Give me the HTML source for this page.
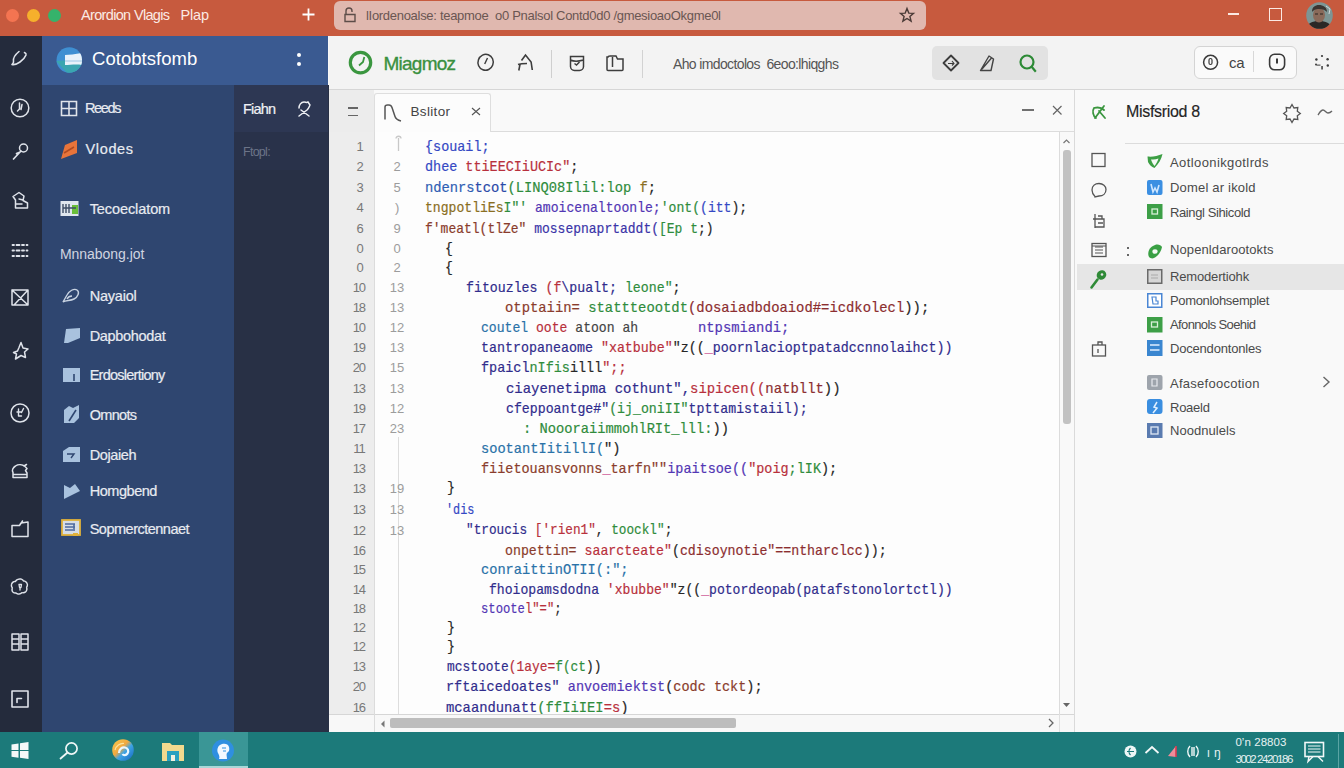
<!DOCTYPE html>
<html><head><meta charset="utf-8">
<style>
*{margin:0;padding:0;box-sizing:border-box}
html,body{width:1344px;height:768px;overflow:hidden;background:#f7f7f7;font-family:"Liberation Sans",sans-serif;position:relative}
.a{position:absolute}
.t{white-space:pre}
svg{overflow:visible}
</style></head><body>
<div class="a" style="left:0px;top:36px;width:42px;height:696px;background:#242b3c;"></div>
<svg class="a" style="left:9.5px;top:49.5px;" width="20" height="20" viewBox="0 0 20 20"><g fill="none" stroke="#dfe3ea" stroke-width="1.5" stroke-linecap="round" stroke-linejoin="round"><path d="M9 1.5C6 4 3 8 3.5 11c.5 2-1 2.5-1.5 3.5 2 .5 5-.5 8-2.5s5-4.5 6-7c.3-1-.5-2-1.5-2.5" stroke-width="1.6"/></g></svg>
<svg class="a" style="left:9.5px;top:98px;" width="20" height="20" viewBox="0 0 20 20"><g fill="none" stroke="#dfe3ea" stroke-width="1.5" stroke-linecap="round" stroke-linejoin="round"><circle cx="10" cy="10" r="8.8"/><path d="M9.5 5v6l-2 2M12 6.5l-1 5" stroke-width="1.5"/></g></svg>
<svg class="a" style="left:9.5px;top:141.5px;" width="20" height="20" viewBox="0 0 20 20"><g fill="none" stroke="#dfe3ea" stroke-width="1.5" stroke-linecap="round" stroke-linejoin="round"><circle cx="13.5" cy="6" r="4"/><path d="M11 9l-7.5 8M9 10.5l-2.5 1" stroke-width="1.7"/></g></svg>
<svg class="a" style="left:9.5px;top:191px;" width="20" height="20" viewBox="0 0 20 20"><g fill="none" stroke="#dfe3ea" stroke-width="1.5" stroke-linecap="round" stroke-linejoin="round"><path d="M3 5.5l6-4 5 3.5-1 4.5 4.5 2.5v5H5.5v-8L3 5.5zM5.5 13h6.5M9 8l4 1"/></g></svg>
<svg class="a" style="left:9.5px;top:240.5px;" width="20" height="20" viewBox="0 0 20 20"><g fill="none" stroke="#dfe3ea" stroke-width="1.5" stroke-linecap="round" stroke-linejoin="round"><path d="M2.5 4h1.5M6.5 4h3M12 4h2M16.5 4h1M2.5 9.5h1.5M6.5 9.5h3M12 9.5h2M16.5 9.5h1M2.5 15h1.5M6.5 15h3M12 15h2M16.5 15h1" stroke-width="1.8"/></g></svg>
<svg class="a" style="left:9.5px;top:287.5px;" width="20" height="20" viewBox="0 0 20 20"><g fill="none" stroke="#dfe3ea" stroke-width="1.5" stroke-linecap="round" stroke-linejoin="round"><path d="M2 2h16v15H2zM2 2l16 15M18 2L4.5 16.5"/></g></svg>
<svg class="a" style="left:9.5px;top:340.5px;" width="20" height="20" viewBox="0 0 20 20"><g fill="none" stroke="#dfe3ea" stroke-width="1.5" stroke-linecap="round" stroke-linejoin="round"><path d="M11 1.5l2 5.5 5 1-3.5 3 1 5.5-4.5-2-5.5 3.5 1-5-3-1.5 4-1.5 1.5-3.5z" stroke-width="1.5"/></g></svg>
<svg class="a" style="left:9.5px;top:402.5px;" width="20" height="20" viewBox="0 0 20 20"><g fill="none" stroke="#dfe3ea" stroke-width="1.5" stroke-linecap="round" stroke-linejoin="round"><circle cx="10" cy="10" r="9"/><path d="M8.5 6v7h3M7 9h4M13.5 5.5l-2 4" stroke-width="1.4"/></g></svg>
<svg class="a" style="left:9.5px;top:462px;" width="20" height="20" viewBox="0 0 20 20"><g fill="none" stroke="#dfe3ea" stroke-width="1.5" stroke-linecap="round" stroke-linejoin="round"><path d="M3 15.5v-5c-1.5-2 0-5 2.5-6.5 3-2 7-1.5 9.5.5l2 2-1.5 2 1.5 2.5v4.5h-14zM3.5 12.5h13M14 4l2.5-1.5"/></g></svg>
<svg class="a" style="left:9.5px;top:518.5px;" width="20" height="20" viewBox="0 0 20 20"><g fill="none" stroke="#dfe3ea" stroke-width="1.5" stroke-linecap="round" stroke-linejoin="round"><path d="M2 6.5v11h16V3l-7 1-1.5 2.5zM11 4.5l1.5-2.5"/></g></svg>
<svg class="a" style="left:9.5px;top:575.5px;" width="20" height="20" viewBox="0 0 20 20"><g fill="none" stroke="#dfe3ea" stroke-width="1.5" stroke-linecap="round" stroke-linejoin="round"><path d="M6 17c-3 .5-5-2.5-3.5-5-2.5-2.5-.5-7 3-6.5 1.5-3 6.5-3.5 8-.5 3.5 0 5 4 3 6.5 1.5 3-1.5 6-4.5 5-1.5 2-4.5 2-6 .5z" stroke-dasharray="3 1"/><path d="M9 8.5h2.5l-.5 3h-1.5zM10 12v2" stroke-width="1.3"/></g></svg>
<svg class="a" style="left:9.5px;top:631.5px;" width="20" height="20" viewBox="0 0 20 20"><g fill="none" stroke="#dfe3ea" stroke-width="1.5" stroke-linecap="round" stroke-linejoin="round"><path d="M2 2h7v16H2zM11 2h7v16h-7zM2 7h7M2 12h7M11 7h7M11 12h7"/></g></svg>
<svg class="a" style="left:9.5px;top:688.5px;" width="20" height="20" viewBox="0 0 20 20"><g fill="none" stroke="#dfe3ea" stroke-width="1.5" stroke-linecap="round" stroke-linejoin="round"><path d="M2 2h16v16H2zM7 13.5v-4h4.5" stroke-width="1.6"/></g></svg>
<div class="a" style="left:42px;top:36px;width:286px;height:49px;background:#3a5a91;"></div>
<svg class="a" style="left:56px;top:47px;" width="27" height="27" viewBox="0 0 27 27"><defs><clipPath id="lc"><circle cx="13.3" cy="13" r="12.8"/></clipPath></defs><g clip-path="url(#lc)"><rect width="27" height="27" fill="#3f8fd2"/><path d="M0 14 L27 12 L27 27 L12 27z" fill="#3aa6b0"/><path d="M9 8c4 0 10-1 17-2v12c-6-1-12 0-17 0z" fill="#e8f2fa"/><path d="M9 14h17" stroke="#9cc8e6" stroke-width="1"/></g></svg>
<div class="a t" style="left:92.00px;top:50.14px;font-family:'Liberation Sans',sans-serif;font-size:18.5px;line-height:18.5px;color:#fff;letter-spacing:0.040px;">Cotobtsfomb</div>
<div class="a" style="left:296.5px;top:53px;width:4px;height:4px;background:#fff;border-radius:50%;"></div>
<div class="a" style="left:296.5px;top:62px;width:4px;height:4px;background:#fff;border-radius:50%;"></div>
<div class="a" style="left:42px;top:85px;width:192px;height:647px;background:#2f4670;"></div>
<svg class="a" style="left:60px;top:100px;" width="18" height="17" viewBox="0 0 18 17"><path d="M1.5 1.5h15v14h-15zM1.5 8.5h15M9 1.5v14" fill="none" stroke="#e0e4ea" stroke-width="1.6"/></svg>
<div class="a t" style="left:85.00px;top:101.32px;font-family:'Liberation Sans',sans-serif;font-size:14.5px;line-height:14.5px;color:#e8ebf1;letter-spacing:-1.375px;-webkit-text-stroke:0.2px;">Reeds</div>
<svg class="a" style="left:61px;top:140px;" width="18" height="20" viewBox="0 0 18 20"><path d="M4 5l12-5v13L0 19z" fill="#e8743a"/><path d="M3 13l10-6" stroke="#b04a20" stroke-width="1.5"/></svg>
<div class="a t" style="left:85.50px;top:142.32px;font-family:'Liberation Sans',sans-serif;font-size:14.5px;line-height:14.5px;color:#e8ebf1;letter-spacing:0.650px;-webkit-text-stroke:0.2px;">Vlodes</div>
<svg class="a" style="left:60px;top:200px;" width="20" height="17" viewBox="0 0 20 17"><rect x="0.5" y="1" width="18" height="15" fill="#dfe6ee"/><rect x="12" y="5" width="6" height="9" fill="#6abf3a"/><path d="M3 4v9M6 4v9M9 4v9M3 8h13" stroke="#3d4d66" stroke-width="1.4"/></svg>
<div class="a t" style="left:89.70px;top:202.22px;font-family:'Liberation Sans',sans-serif;font-size:14.5px;line-height:14.5px;color:#e8ebf1;letter-spacing:-0.090px;-webkit-text-stroke:0.2px;">Tecoeclatom</div>
<svg class="a" style="left:62px;top:287px;" width="18" height="18" viewBox="0 0 18 18"><path d="M1 15l4-7c2-4 7-7 10-5s1 7-3 9-8 1-11 3zM5 12c1-2 3-3 5-3" fill="none" stroke="#c8d3e2" stroke-width="1.4"/></svg>
<div class="a t" style="left:89.70px;top:289.02px;font-family:'Liberation Sans',sans-serif;font-size:14.5px;line-height:14.5px;color:#e8ebf1;letter-spacing:-0.225px;-webkit-text-stroke:0.2px;">Nayaiol</div>
<svg class="a" style="left:63px;top:327px;" width="18" height="17" viewBox="0 0 18 17"><path d="M3 2l14-1v10l-12 5H1z" fill="#a9c2de"/></svg>
<div class="a t" style="left:89.70px;top:328.72px;font-family:'Liberation Sans',sans-serif;font-size:14.5px;line-height:14.5px;color:#e8ebf1;letter-spacing:-0.333px;-webkit-text-stroke:0.2px;">Dapbohodat</div>
<svg class="a" style="left:63px;top:368px;" width="18" height="15" viewBox="0 0 18 15"><rect x="0" y="0" width="17" height="14" fill="#a9c2de"/><path d="M11 6v7" stroke="#2f4670" stroke-width="1.6"/></svg>
<div class="a t" style="left:89.70px;top:368.22px;font-family:'Liberation Sans',sans-serif;font-size:14.5px;line-height:14.5px;color:#e8ebf1;letter-spacing:-0.750px;-webkit-text-stroke:0.2px;">Erdoslertiony</div>
<svg class="a" style="left:63px;top:404px;" width="18" height="19" viewBox="0 0 18 19"><path d="M1 6l5-4 4 2 6-3v13l-5 5H1z" fill="#a9c2de"/><path d="M6 17l7-11" stroke="#2f4670" stroke-width="1.6"/></svg>
<div class="a t" style="left:89.70px;top:408.22px;font-family:'Liberation Sans',sans-serif;font-size:14.5px;line-height:14.5px;color:#e8ebf1;letter-spacing:-0.670px;-webkit-text-stroke:0.2px;">Omnots</div>
<svg class="a" style="left:62px;top:446px;" width="19" height="17" viewBox="0 0 19 17"><path d="M1 5l6-4h11v15H1z" fill="#a9c2de"/><path d="M5 8h7l-3 4" fill="none" stroke="#2f4670" stroke-width="1.4"/></svg>
<div class="a t" style="left:89.70px;top:448.22px;font-family:'Liberation Sans',sans-serif;font-size:14.5px;line-height:14.5px;color:#e8ebf1;letter-spacing:-0.375px;-webkit-text-stroke:0.2px;">Dojaieh</div>
<svg class="a" style="left:63px;top:483px;" width="18" height="17" viewBox="0 0 18 17"><path d="M1 2l6 3 5-4 5 7-16 8z" fill="#a9c2de"/></svg>
<div class="a t" style="left:89.70px;top:484.22px;font-family:'Liberation Sans',sans-serif;font-size:14.5px;line-height:14.5px;color:#e8ebf1;letter-spacing:-0.457px;-webkit-text-stroke:0.2px;">Homgbend</div>
<svg class="a" style="left:61px;top:519px;" width="20" height="18" viewBox="0 0 20 18"><rect x="1" y="1" width="18" height="15" fill="#d7dde6" stroke="#e0b13a" stroke-width="1.8"/><path d="M4 5h10M4 8h10M4 11h8M13 5v7" stroke="#4f6aa0" stroke-width="1.6"/><rect x="12" y="14" width="5" height="3" fill="#e0b13a"/></svg>
<div class="a t" style="left:89.70px;top:521.72px;font-family:'Liberation Sans',sans-serif;font-size:14.5px;line-height:14.5px;color:#e8ebf1;letter-spacing:-0.500px;-webkit-text-stroke:0.2px;">Sopmerctennaet</div>
<div class="a t" style="left:60.00px;top:246.65px;font-family:'Liberation Sans',sans-serif;font-size:14px;line-height:14px;color:#cfd5e0;letter-spacing:-0.045px;">Mnnabong.jot</div>
<div class="a" style="left:234px;top:85px;width:95px;height:647px;background:#283045;"></div>
<div class="a" style="left:234px;top:85px;width:94px;height:47px;background:#2d3753;"></div>
<div class="a" style="left:234px;top:132px;width:94px;height:38px;background:#29324a;"></div>
<div class="a t" style="left:243.00px;top:102.32px;font-family:'Liberation Sans',sans-serif;font-size:14.5px;line-height:14.5px;color:#eef0f4;letter-spacing:-0.812px;-webkit-text-stroke:0.2px;">Fiahn</div>
<svg class="a" style="left:295px;top:100px;" width="18" height="18" viewBox="0 0 18 18"><path d="M4 8c0-3 2-6 5-6 2 0 2 1 4 0l2 3c-1 2-1 3-3 5l-8 6M6 10l8 6" fill="none" stroke="#eef0f4" stroke-width="1.5" stroke-linecap="round"/></svg>
<div class="a t" style="left:243.00px;top:145.92px;font-family:'Liberation Sans',sans-serif;font-size:12.5px;line-height:12.5px;color:#6c7488;letter-spacing:-0.730px;">Ftopl:</div>
<div class="a" style="left:0px;top:0px;width:1344px;height:36px;background:#c75a3e;"></div>
<div class="a" style="left:5.5px;top:8.5px;width:13px;height:13px;background:#f47451;border-radius:50%;"></div>
<div class="a" style="left:27px;top:8.5px;width:13px;height:13px;background:#f6b02c;border-radius:50%;"></div>
<div class="a" style="left:48px;top:8.5px;width:13px;height:13px;background:#35b36b;border-radius:50%;"></div>
<div class="a t" style="left:81.00px;top:7.72px;font-family:'Liberation Sans',sans-serif;font-size:14.5px;line-height:14.5px;color:#fbeae4;letter-spacing:-0.661px;">Arordion&#160;Vlagis</div>
<div class="a t" style="left:180.50px;top:7.72px;font-family:'Liberation Sans',sans-serif;font-size:14.5px;line-height:14.5px;color:#fbeae4;letter-spacing:-0.167px;">Plap</div>
<svg class="a" style="left:301px;top:7px;" width="15" height="15" viewBox="0 0 15 15"><path d="M7.5 1.5v12M1.5 7.5h12" stroke="#fff" stroke-width="1.8"/></svg>
<div class="a" style="left:334px;top:1px;width:592px;height:29px;background:#e0b8af;border-radius:6px;"></div>
<svg class="a" style="left:343px;top:7px;" width="15" height="16" viewBox="0 0 15 16"><path d="M3 7.5V4a3 3 0 0 1 6 0v1M2 7.5h10v7H2z" fill="none" stroke="#5d4d49" stroke-width="1.4"/></svg>
<div class="a t" style="left:366.00px;top:8.99px;font-family:'Liberation Sans',sans-serif;font-size:13px;line-height:13px;color:#6a5652;letter-spacing:-0.297px;">lIordenoalse:&#160;teapmoe&#160;&#160;o0&#160;Pnalsol&#160;Contd0d0&#160;/gmesioaoOkgme0l</div>
<svg class="a" style="left:899px;top:7px;" width="16" height="16" viewBox="0 0 16 16"><path d="M8 1.5l1.8 4.6 4.7.3-3.6 3 1.2 4.7L8 11.5l-4.1 2.6 1.2-4.7-3.6-3 4.7-.3z" fill="none" stroke="#4a3a36" stroke-width="1.4"/></svg>
<div class="a" style="left:1228px;top:13px;width:10.5px;height:2px;background:#fbe9e3;"></div>
<div class="a" style="left:1269px;top:8px;width:13px;height:13px;background:transparent;border:1.6px solid #fbe9e3;"></div>
<svg class="a" style="left:1306px;top:2px;" width="27" height="27" viewBox="0 0 27 27"><defs><clipPath id="av"><circle cx="13.5" cy="13.5" r="13.3"/></clipPath></defs><g clip-path="url(#av)"><rect width="27" height="27" fill="#7d9594"/><path d="M0 27c2-6 6-8 13-8s11 2 14 8z" fill="#2a2826"/><ellipse cx="13" cy="13" rx="6" ry="7.5" fill="#8a6a5a"/><path d="M6 10c0-5 3-7 7-7s8 2 8 7c-2-2-4-3-8-3s-5 1-7 3z" fill="#3a3430"/><path d="M9 12h3M14 12h3" stroke="#2a2420" stroke-width="1.2"/><path d="M20 4l4 3-1 5" fill="none" stroke="#d0d8d8" stroke-width="1"/></g></svg>
<div class="a" style="left:329px;top:36px;width:1015px;height:54px;background:#f3f3f3;border-bottom:1px solid #d6d6d6;"></div>
<svg class="a" style="left:345px;top:47px;" width="32" height="32" viewBox="0 0 32 32"><circle cx="15.5" cy="15.6" r="10.2" fill="none" stroke="#3a963f" stroke-width="3.2"/><path d="M14 18.5l4-3.5 1.3-5" fill="none" stroke="#3a963f" stroke-width="1.8"/></svg>
<div class="a t" style="left:383.50px;top:53.51px;font-family:'Liberation Sans',sans-serif;font-size:19px;line-height:19px;color:#3a9040;letter-spacing:-0.750px;-webkit-text-stroke:0.35px;">Miagmoz</div>
<svg class="a" style="left:475px;top:52px;" width="22" height="22" viewBox="0 0 22 22"><ellipse cx="10.6" cy="10.3" rx="7.6" ry="8" fill="none" stroke="#3d3d3d" stroke-width="1.5" transform="rotate(20 10.6 10.3)"/><path d="M12.5 6l-2.8 6" stroke="#3d3d3d" stroke-width="1.4"/></svg>
<svg class="a" style="left:514px;top:52px;" width="22" height="22" viewBox="0 0 22 22"><path d="M4.8 18.5l1.3-6.5M4 12.5c3-1 5.5-1 9-1M7.5 8.5l4-5.5 5.6 7 1.2 8" fill="none" stroke="#3d3d3d" stroke-width="1.6"/></svg>
<div class="a" style="left:551px;top:50px;width:1px;height:28px;background:#cfcfcf;"></div>
<svg class="a" style="left:566px;top:52px;" width="22" height="22" viewBox="0 0 22 22"><path d="M4.5 4.5h13v10a4 4 0 0 1-4 4h-5a4 4 0 0 1-4-4z M4.5 8c3 1.5 6 2 13 0 M8.5 11.5l2 1.5 3-3" fill="none" stroke="#3d3d3d" stroke-width="1.5"/></svg>
<svg class="a" style="left:604px;top:52px;" width="22" height="22" viewBox="0 0 22 22"><path d="M3 5v12.5c0 .6.4 1 1 1h14c.6 0 1-.4 1-1v-10.5h-5.5l-1.5-3h-6c-1 0-2 .5-2 1z M8.5 5v10" fill="none" stroke="#3d3d3d" stroke-width="1.5"/></svg>
<div class="a" style="left:642px;top:50px;width:1px;height:28px;background:#d2d2d2;"></div>
<div class="a t" style="left:673.00px;top:57.45px;font-family:'Liberation Sans',sans-serif;font-size:14px;line-height:14px;color:#555;letter-spacing:-0.630px;">Aho&#160;imdoctolos&#160;&#160;6eoo:lhiqghs</div>
<div class="a" style="left:932px;top:46px;width:116px;height:34px;background:#e2e2e2;border-radius:5px;"></div>
<svg class="a" style="left:940px;top:52px;" width="22" height="22" viewBox="0 0 22 22"><path d="M11 3.5l7.5 7.5-7.5 7.5-7.5-7.5z" fill="none" stroke="#3d3d3d" stroke-width="1.8" stroke-linejoin="round"/><path d="M8 11.5h6M12 9l2 2.5-2 2" fill="none" stroke="#3d3d3d" stroke-width="1.1"/></svg>
<svg class="a" style="left:977px;top:52px;" width="22" height="22" viewBox="0 0 22 22"><path d="M3.5 18.5l8.5-14.5 4.5 3-2.5 11.5z M5 17l9.5-11" fill="none" stroke="#444" stroke-width="1.4" stroke-linejoin="round"/></svg>
<svg class="a" style="left:1017px;top:52px;" width="22" height="22" viewBox="0 0 22 22"><circle cx="10" cy="10" r="6.5" fill="none" stroke="#2d8a36" stroke-width="2.2"/><path d="M14.5 14.5l4.3 5.3" stroke="#2d8a36" stroke-width="2.2"/></svg>
<div class="a" style="left:1194px;top:46px;width:103px;height:33px;background:#fafafa;border:1px solid #d4d4d4;border-radius:6px;"></div>
<svg class="a" style="left:1200px;top:51px;" width="22" height="22" viewBox="0 0 22 22"><circle cx="10.6" cy="11.3" r="7" fill="none" stroke="#3a3a3a" stroke-width="1.5"/><path d="M9 9c0-2 3-2 3 0v3c0 2-3 2-3 0z" fill="none" stroke="#3a3a3a" stroke-width="1.2"/></svg>
<div class="a t" style="left:1229.00px;top:54.80px;font-family:'Liberation Sans',sans-serif;font-size:15px;line-height:15px;color:#444;letter-spacing:-0.200px;">ca</div>
<div class="a" style="left:1253px;top:51px;width:1px;height:21px;background:#d8d8d8;"></div>
<svg class="a" style="left:1266px;top:51px;" width="22" height="22" viewBox="0 0 22 22"><rect x="3.6" y="3.3" width="15" height="15.5" rx="5" fill="none" stroke="#3a3a3a" stroke-width="1.6"/><path d="M11 7.5v5" stroke="#3a3a3a" stroke-width="2"/></svg>
<svg class="a" style="left:1311px;top:51px;" width="22" height="22" viewBox="0 0 22 22"><g fill="#3a3a3a"><circle cx="11" cy="5" r="1.1"/><circle cx="5.4" cy="8.5" r="1.2"/><circle cx="16.6" cy="8.2" r="1.2"/><circle cx="16.8" cy="14.5" r="1.2"/><circle cx="5" cy="13.5" r="1"/><rect x="10.3" y="15" width="1.5" height="3.5"/><rect x="5.5" y="13.6" width="4" height="1"/></g></svg>
<div class="a" style="left:329px;top:90px;width:745px;height:42px;background:#f9f9f9;border-bottom:1px solid #dcdcdc;"></div>
<div class="a" style="left:329px;top:90px;width:45px;height:42px;background:#ececec;"></div>
<div class="a" style="left:348.3px;top:107.2px;width:10px;height:1.8px;background:#666;"></div>
<div class="a" style="left:348.3px;top:114.7px;width:10px;height:1.8px;background:#666;"></div>
<div class="a" style="left:374px;top:92.5px;width:117px;height:40px;background:#fcfcfc;border:1px solid #dedede;border-bottom:none;border-radius:3px 3px 0 0;"></div>
<svg class="a" style="left:382px;top:101px;" width="24" height="24" viewBox="0 0 24 24"><path d="M3 18.5V6c0-1.5 1-2 2.5-2h1.5c1.5 0 2.5 1 3 2.5l3 9c.5 1.5 2 3.5 6 4.5" fill="none" stroke="#555" stroke-width="1.5"/></svg>
<div class="a t" style="left:410.50px;top:105.07px;font-family:'Liberation Sans',sans-serif;font-size:13.5px;line-height:13.5px;color:#444;letter-spacing:0.333px;">Bslitor</div>
<svg class="a" style="left:471px;top:107px;" width="10" height="9" viewBox="0 0 10 9"><path d="M1 1l8 7M9 1l-8 7" stroke="#555" stroke-width="1.1"/></svg>
<div class="a" style="left:1022px;top:109px;width:11.5px;height:1.8px;background:#707070;"></div>
<svg class="a" style="left:1052px;top:105px;" width="10" height="10" viewBox="0 0 10 10"><path d="M1 1l8.5 8.5M9.5 1l-8.5 8.5" stroke="#666" stroke-width="1.2"/></svg>
<div class="a" style="left:374px;top:132px;width:685px;height:582px;background:#fdfdfd;"></div>
<div class="a" style="left:329px;top:132px;width:46px;height:582px;background:#ededed;border-right:1px solid #dcdcdc;"></div>
<div class="a" style="left:397.5px;top:437px;width:1px;height:277px;background:#dddddd;"></div>
<svg class="a" style="left:394px;top:134px;" width="9" height="18" viewBox="0 0 9 18"><path d="M4.5 4v13M2 4.5c0-3 5-3 5 0" fill="none" stroke="#c8c8c8" stroke-width="1.3"/></svg>
<div class="a t" style="left:425.40px;top:139.51px;font-family:'Liberation Mono',monospace;font-size:15px;line-height:15px;color:#262626;letter-spacing:0.000px;transform:scaleX(0.8958);transform-origin:0.00px 0;-webkit-text-stroke:0.2px;"><span style="color:#3448c4">{souail;</span></div>
<div class="a t" style="left:425.00px;top:160.21px;font-family:'Liberation Mono',monospace;font-size:15px;line-height:15px;color:#262626;letter-spacing:0.000px;transform:scaleX(0.8965);transform-origin:0.00px 0;-webkit-text-stroke:0.2px;"><span style="color:#3448c4">dhee&#160;</span><span style="color:#b8303c">ttiEECIiUCIc&quot;</span><span style="color:#262626">;</span></div>
<div class="a t" style="left:425.00px;top:180.51px;font-family:'Liberation Mono',monospace;font-size:15px;line-height:15px;color:#262626;letter-spacing:0.000px;transform:scaleX(0.9167);transform-origin:0.00px 0;-webkit-text-stroke:0.2px;"><span style="color:#2f5fb4">ndenrs</span><span style="color:#2a4aa8">tcot</span><span style="color:#2f8c3c">(LINQ08Ilil:lop</span><span style="color:#8a6e22">&#160;f</span><span style="color:#262626">;</span></div>
<div class="a t" style="left:425.00px;top:201.21px;font-family:'Liberation Mono',monospace;font-size:15px;line-height:15px;color:#262626;letter-spacing:0.000px;transform:scaleX(0.8729);transform-origin:0.00px 0;-webkit-text-stroke:0.2px;"><span style="color:#8a6e22">tngpotliEs</span><span style="color:#2f8c3c">I&quot;&#x27;</span><span style="color:#5236b4">&#160;amoicenaltoonle;</span><span style="color:#2f8c3c">&#x27;ont(</span><span style="color:#3448c4">(itt</span><span style="color:#262626">);</span></div>
<div class="a t" style="left:425.00px;top:222.11px;font-family:'Liberation Mono',monospace;font-size:15px;line-height:15px;color:#262626;letter-spacing:0.000px;transform:scaleX(0.8664);transform-origin:0.00px 0;-webkit-text-stroke:0.2px;"><span style="color:#8a3c2c">f&#x27;meatl(tlZe&quot;</span><span style="color:#3a34a8">&#160;mossepnaprtaddt(</span><span style="color:#2f8c3c">[Ep&#160;t</span><span style="color:#262626">;)</span></div>
<div class="a t" style="left:445.30px;top:241.51px;font-family:'Liberation Mono',monospace;font-size:15px;line-height:15px;color:#262626;letter-spacing:0.000px;transform:scaleX(0.8800);transform-origin:0.00px 0;-webkit-text-stroke:0.2px;"><span style="color:#262626">{</span></div>
<div class="a t" style="left:445.30px;top:261.31px;font-family:'Liberation Mono',monospace;font-size:15px;line-height:15px;color:#262626;letter-spacing:0.000px;transform:scaleX(0.8800);transform-origin:0.00px 0;-webkit-text-stroke:0.2px;"><span style="color:#262626">{</span></div>
<div class="a t" style="left:466.00px;top:280.81px;font-family:'Liberation Mono',monospace;font-size:15px;line-height:15px;color:#262626;letter-spacing:0.000px;transform:scaleX(0.8827);transform-origin:0.00px 0;-webkit-text-stroke:0.2px;"><span style="color:#302c8c">fitouzles</span><span style="color:#b8303c">&#160;(f</span><span style="color:#302c8c">\pualt;</span><span style="color:#2f8c3c">&#160;leone&quot;</span><span style="color:#262626">;</span></div>
<div class="a t" style="left:505.00px;top:301.01px;font-family:'Liberation Mono',monospace;font-size:15px;line-height:15px;color:#262626;letter-spacing:0.000px;transform:scaleX(0.9240);transform-origin:0.00px 0;-webkit-text-stroke:0.2px;"><span style="color:#8a3c2c">otptaiin=</span><span style="color:#2f8c3c">&#160;stattteootdt</span><span style="color:#8c2e30">(dosaiadbdoaiod#=icdkolecl</span><span style="color:#262626">));</span></div>
<div class="a t" style="left:481.40px;top:321.21px;font-family:'Liberation Mono',monospace;font-size:15px;line-height:15px;color:#262626;letter-spacing:0.000px;transform:scaleX(0.8728);transform-origin:0.00px 0;-webkit-text-stroke:0.2px;"><span style="color:#2a72a8">coutel</span><span style="color:#b8303c">&#160;oote</span><span style="color:#444">&#160;atoon&#160;ah</span></div>
<div class="a t" style="left:481.00px;top:341.01px;font-family:'Liberation Mono',monospace;font-size:15px;line-height:15px;color:#262626;letter-spacing:0.000px;transform:scaleX(0.8879);transform-origin:0.00px 0;-webkit-text-stroke:0.2px;"><span style="color:#302c8c">tantropaneaome</span><span style="color:#b8303c">&#160;&quot;xatbube&quot;</span><span style="color:#262626">&quot;z((</span><span style="color:#d0609a">_</span><span style="color:#302c8c">poornlacioptpatadccnnolaihct))</span></div>
<div class="a t" style="left:481.00px;top:360.91px;font-family:'Liberation Mono',monospace;font-size:15px;line-height:15px;color:#262626;letter-spacing:0.000px;transform:scaleX(0.8981);transform-origin:0.00px 0;-webkit-text-stroke:0.2px;"><span style="color:#302c8c">fpaicl</span><span style="color:#2f8c3c">nIfis</span><span style="color:#262626">illl</span><span style="color:#b8303c">&quot;;;</span></div>
<div class="a t" style="left:506.00px;top:381.51px;font-family:'Liberation Mono',monospace;font-size:15px;line-height:15px;color:#262626;letter-spacing:0.000px;transform:scaleX(0.9292);transform-origin:0.00px 0;-webkit-text-stroke:0.2px;"><span style="color:#302c8c">ciayenetipma&#160;cothunt&quot;,</span><span style="color:#b8303c">sipicen((</span><span style="color:#8c2e30">natbllt</span><span style="color:#262626">))</span></div>
<div class="a t" style="left:506.00px;top:401.71px;font-family:'Liberation Mono',monospace;font-size:15px;line-height:15px;color:#262626;letter-spacing:0.000px;transform:scaleX(0.8816);transform-origin:0.00px 0;-webkit-text-stroke:0.2px;"><span style="color:#302c8c">cfeppoantge#&quot;</span><span style="color:#2f8c3c">(ij_oniII&quot;</span><span style="color:#302c8c">tpttamistaiil);</span></div>
<div class="a t" style="left:522.50px;top:421.81px;font-family:'Liberation Mono',monospace;font-size:15px;line-height:15px;color:#262626;letter-spacing:0.000px;transform:scaleX(0.9156);transform-origin:0.00px 0;-webkit-text-stroke:0.2px;"><span style="color:#2f8c3c">:&#160;NoooraiimmohlRIt_lll:</span><span style="color:#262626">))</span></div>
<div class="a t" style="left:480.80px;top:442.01px;font-family:'Liberation Mono',monospace;font-size:15px;line-height:15px;color:#262626;letter-spacing:0.000px;transform:scaleX(0.9118);transform-origin:0.00px 0;-webkit-text-stroke:0.2px;"><span style="color:#2a72a8">sootantIitillI(</span><span style="color:#262626">&quot;)</span></div>
<div class="a t" style="left:481.00px;top:462.21px;font-family:'Liberation Mono',monospace;font-size:15px;line-height:15px;color:#262626;letter-spacing:0.000px;transform:scaleX(0.8992);transform-origin:0.00px 0;-webkit-text-stroke:0.2px;"><span style="color:#8a3c2c">fiietouansvonns</span><span style="color:#d0609a">_</span><span style="color:#8a3c2c">tarfn&quot;&quot;</span><span style="color:#5236b4">ipaitsoe((</span><span style="color:#b8303c">&quot;poig</span><span style="color:#2f8c3c">;lIK</span><span style="color:#262626">);</span></div>
<div class="a t" style="left:446.50px;top:481.41px;font-family:'Liberation Mono',monospace;font-size:15px;line-height:15px;color:#262626;letter-spacing:0.000px;transform:scaleX(0.8800);transform-origin:0.00px 0;-webkit-text-stroke:0.2px;"><span style="color:#262626">}</span></div>
<div class="a t" style="left:446.30px;top:502.51px;font-family:'Liberation Mono',monospace;font-size:15px;line-height:15px;color:#262626;letter-spacing:0.000px;transform:scaleX(0.7889);transform-origin:0.00px 0;-webkit-text-stroke:0.2px;"><span style="color:#3448c4">&#x27;dis</span></div>
<div class="a t" style="left:466.30px;top:523.41px;font-family:'Liberation Mono',monospace;font-size:15px;line-height:15px;color:#262626;letter-spacing:0.000px;transform:scaleX(0.8486);transform-origin:0.00px 0;-webkit-text-stroke:0.2px;"><span style="color:#302c8c">&quot;troucis</span><span style="color:#b8303c">&#160;[&#x27;rien1&quot;</span><span style="color:#262626">,</span><span style="color:#2f8c3c">&#160;toockl&quot;</span><span style="color:#262626">;</span></div>
<div class="a t" style="left:505.00px;top:544.21px;font-family:'Liberation Mono',monospace;font-size:15px;line-height:15px;color:#262626;letter-spacing:0.000px;transform:scaleX(0.8831);transform-origin:0.00px 0;-webkit-text-stroke:0.2px;"><span style="color:#8a3c2c">onpettin=</span><span style="color:#b8303c">&#160;saarcteate&quot;</span><span style="color:#262626">(</span><span style="color:#8c2e30">cdisoynotie&quot;==ntharclcc</span><span style="color:#262626">));</span></div>
<div class="a t" style="left:481.00px;top:563.21px;font-family:'Liberation Mono',monospace;font-size:15px;line-height:15px;color:#262626;letter-spacing:0.000px;transform:scaleX(0.9105);transform-origin:0.00px 0;-webkit-text-stroke:0.2px;"><span style="color:#2a72a8">conraittinOTII(:&quot;;</span></div>
<div class="a t" style="left:489.00px;top:583.01px;font-family:'Liberation Mono',monospace;font-size:15px;line-height:15px;color:#262626;letter-spacing:0.000px;transform:scaleX(0.8729);transform-origin:0.00px 0;-webkit-text-stroke:0.2px;"><span style="color:#302c8c">fhoiopamsdodna</span><span style="color:#b8303c">&#160;&#x27;xbubbe&quot;</span><span style="color:#262626">&quot;z((</span><span style="color:#d0609a">_</span><span style="color:#302c8c">potordeopab(patafstonolortctl))</span></div>
<div class="a t" style="left:481.00px;top:602.31px;font-family:'Liberation Mono',monospace;font-size:15px;line-height:15px;color:#262626;letter-spacing:0.000px;transform:scaleX(0.8131);transform-origin:0.00px 0;-webkit-text-stroke:0.2px;"><span style="color:#5236b4">stoote</span><span style="color:#b8303c">l&quot;=&quot;</span><span style="color:#262626">;</span></div>
<div class="a t" style="left:446.50px;top:620.91px;font-family:'Liberation Mono',monospace;font-size:15px;line-height:15px;color:#262626;letter-spacing:0.000px;transform:scaleX(0.8800);transform-origin:0.00px 0;-webkit-text-stroke:0.2px;"><span style="color:#262626">}</span></div>
<div class="a t" style="left:446.50px;top:639.91px;font-family:'Liberation Mono',monospace;font-size:15px;line-height:15px;color:#262626;letter-spacing:0.000px;transform:scaleX(0.8800);transform-origin:0.00px 0;-webkit-text-stroke:0.2px;"><span style="color:#262626">}</span></div>
<div class="a t" style="left:446.60px;top:660.16px;font-family:'Liberation Mono',monospace;font-size:15px;line-height:15px;color:#262626;letter-spacing:0.000px;transform:scaleX(0.8583);transform-origin:0.00px 0;-webkit-text-stroke:0.2px;"><span style="color:#302c8c">mcstoote</span><span style="color:#b8303c">(1aye=</span><span style="color:#2f8c3c">f(ct</span><span style="color:#262626">))</span></div>
<div class="a t" style="left:446.00px;top:679.91px;font-family:'Liberation Mono',monospace;font-size:15px;line-height:15px;color:#262626;letter-spacing:0.000px;transform:scaleX(0.9017);transform-origin:0.00px 0;-webkit-text-stroke:0.2px;"><span style="color:#302c8c">rftaicedoates&quot;</span><span style="color:#5236b4">&#160;anvoemiektst</span><span style="color:#262626">(</span><span style="color:#8a3c2c">codc&#160;tckt</span><span style="color:#262626">);</span></div>
<div class="a t" style="left:446.00px;top:700.81px;font-family:'Liberation Mono',monospace;font-size:15px;line-height:15px;color:#262626;letter-spacing:0.000px;transform:scaleX(0.9217);transform-origin:0.00px 0;-webkit-text-stroke:0.2px;"><span style="color:#302c8c">mcaandunatt</span><span style="color:#2f8c3c">(ffIiIEI</span><span style="color:#b8303c">=s</span><span style="color:#262626">)</span></div>
<div class="a t" style="left:697.70px;top:321.21px;font-family:'Liberation Mono',monospace;font-size:15px;line-height:15px;color:#5236b4;letter-spacing:0.000px;transform:scaleX(0.9222);transform-origin:0.00px 0;-webkit-text-stroke:0.2px;">ntpsmiandi;</div>
<div class="a t" style="left:356.38px;top:139.69px;font-family:'Liberation Sans',sans-serif;font-size:13px;line-height:13px;color:#787878;letter-spacing:0.000px;">1</div>
<div class="a t" style="left:356.38px;top:160.39px;font-family:'Liberation Sans',sans-serif;font-size:13px;line-height:13px;color:#787878;letter-spacing:0.000px;">2</div>
<div class="a t" style="left:356.38px;top:180.69px;font-family:'Liberation Sans',sans-serif;font-size:13px;line-height:13px;color:#787878;letter-spacing:0.000px;">3</div>
<div class="a t" style="left:356.38px;top:201.39px;font-family:'Liberation Sans',sans-serif;font-size:13px;line-height:13px;color:#787878;letter-spacing:0.000px;">4</div>
<div class="a t" style="left:356.38px;top:222.29px;font-family:'Liberation Sans',sans-serif;font-size:13px;line-height:13px;color:#787878;letter-spacing:0.000px;">6</div>
<div class="a t" style="left:356.38px;top:241.69px;font-family:'Liberation Sans',sans-serif;font-size:13px;line-height:13px;color:#787878;letter-spacing:0.000px;">0</div>
<div class="a t" style="left:356.38px;top:261.49px;font-family:'Liberation Sans',sans-serif;font-size:13px;line-height:13px;color:#787878;letter-spacing:0.000px;">0</div>
<div class="a t" style="left:352.75px;top:280.99px;font-family:'Liberation Sans',sans-serif;font-size:13px;line-height:13px;color:#787878;letter-spacing:-1.160px;">10</div>
<div class="a t" style="left:352.75px;top:301.19px;font-family:'Liberation Sans',sans-serif;font-size:13px;line-height:13px;color:#787878;letter-spacing:-1.160px;">18</div>
<div class="a t" style="left:352.75px;top:321.39px;font-family:'Liberation Sans',sans-serif;font-size:13px;line-height:13px;color:#787878;letter-spacing:-1.160px;">10</div>
<div class="a t" style="left:352.75px;top:341.19px;font-family:'Liberation Sans',sans-serif;font-size:13px;line-height:13px;color:#787878;letter-spacing:-1.160px;">19</div>
<div class="a t" style="left:352.75px;top:361.09px;font-family:'Liberation Sans',sans-serif;font-size:13px;line-height:13px;color:#787878;letter-spacing:-1.160px;">20</div>
<div class="a t" style="left:352.75px;top:381.69px;font-family:'Liberation Sans',sans-serif;font-size:13px;line-height:13px;color:#787878;letter-spacing:-1.160px;">13</div>
<div class="a t" style="left:352.75px;top:401.89px;font-family:'Liberation Sans',sans-serif;font-size:13px;line-height:13px;color:#787878;letter-spacing:-1.160px;">19</div>
<div class="a t" style="left:352.75px;top:421.99px;font-family:'Liberation Sans',sans-serif;font-size:13px;line-height:13px;color:#787878;letter-spacing:-1.160px;">17</div>
<div class="a t" style="left:353.25px;top:442.19px;font-family:'Liberation Sans',sans-serif;font-size:13px;line-height:13px;color:#787878;letter-spacing:-1.080px;">11</div>
<div class="a t" style="left:352.75px;top:462.39px;font-family:'Liberation Sans',sans-serif;font-size:13px;line-height:13px;color:#787878;letter-spacing:-1.160px;">13</div>
<div class="a t" style="left:352.75px;top:481.59px;font-family:'Liberation Sans',sans-serif;font-size:13px;line-height:13px;color:#787878;letter-spacing:-1.160px;">13</div>
<div class="a t" style="left:352.75px;top:502.69px;font-family:'Liberation Sans',sans-serif;font-size:13px;line-height:13px;color:#787878;letter-spacing:-1.160px;">13</div>
<div class="a t" style="left:352.75px;top:523.59px;font-family:'Liberation Sans',sans-serif;font-size:13px;line-height:13px;color:#787878;letter-spacing:-1.160px;">12</div>
<div class="a t" style="left:352.75px;top:544.39px;font-family:'Liberation Sans',sans-serif;font-size:13px;line-height:13px;color:#787878;letter-spacing:-1.160px;">16</div>
<div class="a t" style="left:352.75px;top:563.39px;font-family:'Liberation Sans',sans-serif;font-size:13px;line-height:13px;color:#787878;letter-spacing:-1.160px;">15</div>
<div class="a t" style="left:352.75px;top:583.19px;font-family:'Liberation Sans',sans-serif;font-size:13px;line-height:13px;color:#787878;letter-spacing:-1.160px;">14</div>
<div class="a t" style="left:352.75px;top:602.49px;font-family:'Liberation Sans',sans-serif;font-size:13px;line-height:13px;color:#787878;letter-spacing:-1.160px;">18</div>
<div class="a t" style="left:352.75px;top:621.09px;font-family:'Liberation Sans',sans-serif;font-size:13px;line-height:13px;color:#787878;letter-spacing:-1.160px;">12</div>
<div class="a t" style="left:352.75px;top:640.09px;font-family:'Liberation Sans',sans-serif;font-size:13px;line-height:13px;color:#787878;letter-spacing:-1.160px;">12</div>
<div class="a t" style="left:352.75px;top:660.34px;font-family:'Liberation Sans',sans-serif;font-size:13px;line-height:13px;color:#787878;letter-spacing:-1.160px;">13</div>
<div class="a t" style="left:352.75px;top:680.09px;font-family:'Liberation Sans',sans-serif;font-size:13px;line-height:13px;color:#787878;letter-spacing:-1.160px;">20</div>
<div class="a t" style="left:352.75px;top:700.99px;font-family:'Liberation Sans',sans-serif;font-size:13px;line-height:13px;color:#787878;letter-spacing:-1.160px;">16</div>
<div class="a t" style="left:393.38px;top:160.39px;font-family:'Liberation Sans',sans-serif;font-size:13px;line-height:13px;color:#9c9c9c;letter-spacing:0.000px;">2</div>
<div class="a t" style="left:393.38px;top:180.69px;font-family:'Liberation Sans',sans-serif;font-size:13px;line-height:13px;color:#9c9c9c;letter-spacing:0.000px;">5</div>
<div class="a t" style="left:394.88px;top:201.39px;font-family:'Liberation Sans',sans-serif;font-size:13px;line-height:13px;color:#9c9c9c;letter-spacing:0.000px;">)</div>
<div class="a t" style="left:393.38px;top:222.29px;font-family:'Liberation Sans',sans-serif;font-size:13px;line-height:13px;color:#9c9c9c;letter-spacing:0.000px;">9</div>
<div class="a t" style="left:393.38px;top:241.69px;font-family:'Liberation Sans',sans-serif;font-size:13px;line-height:13px;color:#9c9c9c;letter-spacing:0.000px;">0</div>
<div class="a t" style="left:393.38px;top:261.49px;font-family:'Liberation Sans',sans-serif;font-size:13px;line-height:13px;color:#9c9c9c;letter-spacing:0.000px;">2</div>
<div class="a t" style="left:389.75px;top:280.99px;font-family:'Liberation Sans',sans-serif;font-size:13px;line-height:13px;color:#9c9c9c;letter-spacing:0.000px;">13</div>
<div class="a t" style="left:389.75px;top:301.19px;font-family:'Liberation Sans',sans-serif;font-size:13px;line-height:13px;color:#9c9c9c;letter-spacing:0.000px;">13</div>
<div class="a t" style="left:389.75px;top:321.39px;font-family:'Liberation Sans',sans-serif;font-size:13px;line-height:13px;color:#9c9c9c;letter-spacing:0.000px;">12</div>
<div class="a t" style="left:389.75px;top:341.19px;font-family:'Liberation Sans',sans-serif;font-size:13px;line-height:13px;color:#9c9c9c;letter-spacing:0.000px;">13</div>
<div class="a t" style="left:389.75px;top:361.09px;font-family:'Liberation Sans',sans-serif;font-size:13px;line-height:13px;color:#9c9c9c;letter-spacing:0.000px;">15</div>
<div class="a t" style="left:389.75px;top:381.69px;font-family:'Liberation Sans',sans-serif;font-size:13px;line-height:13px;color:#9c9c9c;letter-spacing:0.000px;">13</div>
<div class="a t" style="left:389.75px;top:401.89px;font-family:'Liberation Sans',sans-serif;font-size:13px;line-height:13px;color:#9c9c9c;letter-spacing:0.000px;">12</div>
<div class="a t" style="left:389.75px;top:421.99px;font-family:'Liberation Sans',sans-serif;font-size:13px;line-height:13px;color:#9c9c9c;letter-spacing:0.000px;">23</div>
<div class="a t" style="left:389.75px;top:481.59px;font-family:'Liberation Sans',sans-serif;font-size:13px;line-height:13px;color:#9c9c9c;letter-spacing:0.000px;">19</div>
<div class="a t" style="left:389.75px;top:502.69px;font-family:'Liberation Sans',sans-serif;font-size:13px;line-height:13px;color:#9c9c9c;letter-spacing:0.000px;">13</div>
<div class="a t" style="left:389.75px;top:523.59px;font-family:'Liberation Sans',sans-serif;font-size:13px;line-height:13px;color:#9c9c9c;letter-spacing:0.000px;">13</div>
<div class="a" style="left:329px;top:714px;width:745px;height:18px;background:#f8f8f8;border-top:1px solid #d6d6d6;"></div>
<div class="a" style="left:374px;top:714px;width:1px;height:18px;background:#dcdcdc;"></div>
<svg class="a" style="left:379px;top:719px;" width="8" height="10" viewBox="0 0 8 10"><path d="M5.5 1.5l-3.5 3.5 3.5 3.5z" fill="#777"/></svg>
<div class="a" style="left:390px;top:717.5px;width:346px;height:10px;background:#bdbdbd;border-radius:2px;"></div>
<svg class="a" style="left:1046px;top:717px;" width="10" height="12" viewBox="0 0 10 12"><path d="M3 2l4 4-4 4" fill="none" stroke="#666" stroke-width="1.3"/></svg>
<div class="a" style="left:1059px;top:714px;width:1px;height:18px;background:#e0e0e0;"></div>
<div class="a" style="left:1059px;top:132px;width:15px;height:582px;background:#f9f9f9;border-left:1px solid #dcdcdc;"></div>
<svg class="a" style="left:1062px;top:138px;" width="9" height="6" viewBox="0 0 9 6"><path d="M1.5 5l3-3 3 3" fill="none" stroke="#777" stroke-width="1.2"/></svg>
<div class="a" style="left:1063px;top:149.5px;width:8px;height:274px;background:#c2c2c2;border-radius:3px;"></div>
<svg class="a" style="left:1061px;top:701px;" width="11" height="8" viewBox="0 0 11 8"><path d="M2 2h7l-3.5 4z" fill="#666"/></svg>
<div class="a" style="left:1074px;top:90px;width:270px;height:642px;background:#f9f9f9;border-left:1px solid #dadada;"></div>
<svg class="a" style="left:1090px;top:103px;" width="20" height="20" viewBox="0 0 20 20"><path d="M4 5c4-1 8 0 10 2M4 5c-2 3-1 8 2 10M14 3l-9 12M9 8l6 7" fill="none" stroke="#3a963f" stroke-width="1.8" stroke-linecap="round"/></svg>
<div class="a t" style="left:1126.00px;top:103.75px;font-family:'Liberation Sans',sans-serif;font-size:16px;line-height:16px;color:#252525;letter-spacing:-0.325px;-webkit-text-stroke:0.15px;">Misfsriod&#160;8</div>
<svg class="a" style="left:1282px;top:102px;" width="20" height="20" viewBox="0 0 20 20"><path d="M10 2.5l2 3.5 3.8-.5-.5 3.8 3 2.2-3 2.2.5 3.8-3.8-.5-2 3.5-2-3.5-3.8.5.5-3.8-3-2.2 3-2.2-.5-3.8 3.8.5z" fill="none" stroke="#555" stroke-width="1.3"/></svg>
<svg class="a" style="left:1316px;top:106px;" width="18" height="12" viewBox="0 0 18 12"><path d="M2 9c2-3 3-5 5-5s3 3 5 3 3-1 4-2" fill="none" stroke="#666" stroke-width="1.4"/></svg>
<div class="a" style="left:1125px;top:142.5px;width:219px;height:1px;background:#dcdcdc;"></div>
<svg class="a" style="left:1090px;top:151px;" width="18" height="18" viewBox="0 0 18 18"><rect x="2" y="2.5" width="13" height="13" fill="none" stroke="#555" stroke-width="1.3"/></svg>
<svg class="a" style="left:1090px;top:181px;" width="18" height="18" viewBox="0 0 18 18"><path d="M5 15.5c-1-1-3-3-3-6.5 0-4 3-6.5 7-6.5s7 2.5 7 6c0 4-3 6.5-7 6.5l-4 1z" fill="none" stroke="#555" stroke-width="1.3"/></svg>
<svg class="a" style="left:1090px;top:211px;" width="18" height="18" viewBox="0 0 18 18"><path d="M5 3v14M5 8h9v8H5M3 8h4M8 5h4v3M8 12h5" fill="none" stroke="#555" stroke-width="1.3"/></svg>
<svg class="a" style="left:1090px;top:241px;" width="18" height="18" viewBox="0 0 18 18"><rect x="2" y="2.5" width="14" height="13" fill="none" stroke="#555" stroke-width="1.3"/><path d="M5 6h8M5 9h8M5 12h8M2 5h14" stroke="#555" stroke-width="1"/></svg>
<div class="a" style="left:1126.8px;top:246.5px;width:2px;height:2px;background:#666;"></div>
<div class="a" style="left:1126.8px;top:253.5px;width:2px;height:2px;background:#666;"></div>
<div class="a" style="left:1077px;top:263.5px;width:267px;height:26.5px;background:#e6e6e6;"></div>
<svg class="a" style="left:1089px;top:268px;" width="20" height="22" viewBox="0 0 20 22"><path d="M2.5 19.5l6-8" stroke="#2f8a37" stroke-width="2.6" stroke-linecap="round"/><ellipse cx="12.5" cy="7" rx="5" ry="4.5" fill="#2f8a37" transform="rotate(-35 12.5 7)"/><circle cx="13" cy="6.5" r="1.3" fill="#e6e6e6"/></svg>
<svg class="a" style="left:1090px;top:340px;" width="18" height="18" viewBox="0 0 18 18"><rect x="2.5" y="5" width="13" height="11" fill="none" stroke="#555" stroke-width="1.3"/><path d="M8 5V2h4v3M8 9v4" stroke="#555" stroke-width="1.3" fill="none"/></svg>
<svg class="a" style="left:1147px;top:154px;" width="16" height="15" viewBox="0 0 16 15"><path d="M0.5 2.5c5 .5 10-.5 15-2.5-1 5-4 10-8 14-3-1-5-3-6.5-6z" fill="#3d9f45"/><path d="M4 5.5c3 .3 5 0 7.5-1-1 3-2.5 5.5-4 7.5-1.5-2-2.8-4-3.5-6.5z" fill="#f4faf4"/></svg>
<div class="a t" style="left:1170.00px;top:155.99px;font-family:'Liberation Sans',sans-serif;font-size:13px;line-height:13px;color:#4a4a4a;letter-spacing:0.400px;">Aotloonikgotlrds</div>
<svg class="a" style="left:1147px;top:179.5px;" width="16" height="15" viewBox="0 0 16 15"><rect x="0" y="0" width="15.5" height="15" rx="2" fill="#3b8fe2"/><path d="M4 4l2 8 2-4 2 4 2-7" fill="none" stroke="#cfe6ff" stroke-width="1.6"/></svg>
<div class="a t" style="left:1170.00px;top:180.99px;font-family:'Liberation Sans',sans-serif;font-size:13px;line-height:13px;color:#4a4a4a;letter-spacing:0.192px;">Domel&#160;ar&#160;ikold</div>
<svg class="a" style="left:1147px;top:204px;" width="16" height="15" viewBox="0 0 16 15"><rect x="0" y="0" width="15.5" height="15" fill="#3d9f47"/><rect x="5" y="5" width="5.5" height="5" fill="none" stroke="#d8f0d8" stroke-width="1.3"/></svg>
<div class="a t" style="left:1170.00px;top:205.79px;font-family:'Liberation Sans',sans-serif;font-size:13px;line-height:13px;color:#4a4a4a;letter-spacing:-0.393px;">Raingl&#160;Sihicold</div>
<svg class="a" style="left:1147px;top:242.5px;" width="16" height="15.5" viewBox="0 0 16 15.5"><path d="M2 14c-2-4 0-10 6-12 3-1 6 0 7 2-1 5-4 9-8 11-2 1-4 0-5-1z" fill="#3aa044"/><ellipse cx="8" cy="8.5" rx="2.6" ry="2.3" fill="#f4faf4"/></svg>
<div class="a t" style="left:1170.00px;top:243.29px;font-family:'Liberation Sans',sans-serif;font-size:13px;line-height:13px;color:#4a4a4a;letter-spacing:0.100px;">Nopenldarootokts</div>
<svg class="a" style="left:1147px;top:269px;" width="16" height="15" viewBox="0 0 16 15"><rect x="0.75" y="0.75" width="14" height="13.5" fill="#d6d6d6" stroke="#6a6a6a" stroke-width="1.5"/><path d="M4 6h7M4 9h7" stroke="#aaa" stroke-width="1"/></svg>
<div class="a t" style="left:1170.00px;top:270.19px;font-family:'Liberation Sans',sans-serif;font-size:13px;line-height:13px;color:#4a4a4a;letter-spacing:-0.159px;">Remodertiohk</div>
<svg class="a" style="left:1147px;top:293px;" width="16" height="15" viewBox="0 0 16 15"><rect x="0.75" y="0.75" width="14" height="13.5" fill="#fff" stroke="#4a86d4" stroke-width="1.5"/><path d="M5 4h4v4h2v3H6z" fill="none" stroke="#4a86d4" stroke-width="1.2"/></svg>
<div class="a t" style="left:1170.00px;top:294.29px;font-family:'Liberation Sans',sans-serif;font-size:13px;line-height:13px;color:#4a4a4a;letter-spacing:-0.339px;">Pomonlohsemplet</div>
<svg class="a" style="left:1147px;top:316.5px;" width="16" height="16" viewBox="0 0 16 16"><rect x="0" y="0" width="15.5" height="15.5" fill="#3d9f47"/><rect x="4.5" y="5" width="6" height="5" fill="none" stroke="#d8f0d8" stroke-width="1.3"/></svg>
<div class="a t" style="left:1170.00px;top:318.29px;font-family:'Liberation Sans',sans-serif;font-size:13px;line-height:13px;color:#4a4a4a;letter-spacing:-0.625px;">Afonnols&#160;Soehid</div>
<svg class="a" style="left:1147px;top:340px;" width="16" height="16.5" viewBox="0 0 16 16.5"><rect x="0" y="0" width="15.5" height="16" fill="#3a86d0"/><path d="M3 5h9.5M3 10h9.5" stroke="#e0eeff" stroke-width="1.6"/></svg>
<div class="a t" style="left:1170.00px;top:342.49px;font-family:'Liberation Sans',sans-serif;font-size:13px;line-height:13px;color:#4a4a4a;letter-spacing:-0.192px;">Docendontonles</div>
<svg class="a" style="left:1147px;top:374.5px;" width="16" height="15" viewBox="0 0 16 15"><rect x="0" y="0" width="15.5" height="15" rx="2" fill="#9ea4ac"/><path d="M5 4h5v7H5z" fill="none" stroke="#e8eaee" stroke-width="1.2"/></svg>
<div class="a t" style="left:1170.00px;top:377.19px;font-family:'Liberation Sans',sans-serif;font-size:13px;line-height:13px;color:#4a4a4a;letter-spacing:0.269px;">Afasefoocotion</div>
<svg class="a" style="left:1147px;top:399px;" width="16" height="15" viewBox="0 0 16 15"><rect x="0" y="0" width="15.5" height="15" rx="3" fill="#3a8ee0"/><path d="M10 3l-3 5 3 1-4 5" fill="none" stroke="#e0f0ff" stroke-width="1.5"/></svg>
<div class="a t" style="left:1170.00px;top:401.09px;font-family:'Liberation Sans',sans-serif;font-size:13px;line-height:13px;color:#4a4a4a;letter-spacing:-0.250px;">Roaeld</div>
<svg class="a" style="left:1147px;top:422.5px;" width="16" height="15" viewBox="0 0 16 15"><rect x="0" y="0" width="15.5" height="15" fill="#5a7bb0"/><rect x="4" y="4" width="7" height="7" fill="none" stroke="#dfe8f5" stroke-width="1.3"/></svg>
<div class="a t" style="left:1170.00px;top:424.09px;font-family:'Liberation Sans',sans-serif;font-size:13px;line-height:13px;color:#4a4a4a;letter-spacing:0.056px;">Noodnulels</div>
<svg class="a" style="left:1320px;top:375px;" width="12" height="14" viewBox="0 0 12 14"><path d="M3.5 2l5.5 5-5.5 5" fill="none" stroke="#666" stroke-width="1.4"/></svg>
<div class="a" style="left:0px;top:732px;width:1344px;height:36px;background:#1c7a7a;"></div>
<svg class="a" style="left:11px;top:742px;" width="18" height="17" viewBox="0 0 18 17"><path d="M0.5 2.5l7-1v6.5h-7zM9 1.2l8.5-1.2v8h-8.5zM0.5 9h7v6.8l-7-1zM9 9h8.5v8l-8.5-1.2z" fill="#f4f8f8"/></svg>
<svg class="a" style="left:58px;top:741px;" width="22" height="19" viewBox="0 0 22 19"><circle cx="13.5" cy="7.5" r="5.6" fill="none" stroke="#eef6f6" stroke-width="1.7"/><path d="M9.5 11.5l-7.5 6.5" stroke="#eef6f6" stroke-width="1.8"/></svg>
<svg class="a" style="left:111px;top:739px;" width="24" height="22" viewBox="0 0 24 22"><defs><linearGradient id="eg" x1="0.1" y1="0.1" x2="0.9" y2="0.9"><stop offset="0" stop-color="#f6c24a"/><stop offset="0.4" stop-color="#f0a840"/><stop offset="0.6" stop-color="#3ea4e6"/><stop offset="1" stop-color="#1f74c6"/></linearGradient></defs><circle cx="12" cy="11" r="10.8" fill="url(#eg)"/><path d="M8 14c0-4 3-6 6-5.5 3 .5 4 3.5 2.5 6-1.5 2-4 2-5 .5" fill="none" stroke="#eaf6ff" stroke-width="2.2"/><path d="M4 11c1-4 5-7 9-6.5" fill="none" stroke="#fbe4a0" stroke-width="1.2"/></svg>
<svg class="a" style="left:161px;top:740px;" width="24" height="21" viewBox="0 0 24 21"><path d="M1 3h8l2 2h12v16H1z" fill="#f2d98e"/><rect x="6" y="11" width="12" height="10" fill="#2aa0c0"/><rect x="10" y="15" width="4" height="6" fill="#f2f0e0"/></svg>
<div class="a" style="left:199px;top:732px;width:49px;height:36px;background:#3a9696;"></div>
<div class="a" style="left:199px;top:766px;width:49px;height:2px;background:#a8d8d8;"></div>
<svg class="a" style="left:211px;top:739px;" width="24" height="23" viewBox="0 0 24 23"><circle cx="12" cy="11.5" r="11" fill="#2f8fe0"/><path d="M8 20c1-2 0-4-1-6s-1-6 2-8 8-2 9 2-1 5-2 6 0 4 0 6z" fill="#f2f8ff"/><path d="M11 9h4M12 12h3" stroke="#2f8fe0" stroke-width="1.2"/></svg>
<svg class="a" style="left:1124px;top:745px;" width="13" height="13" viewBox="0 0 13 13"><circle cx="6.5" cy="6.5" r="6" fill="#eef6f6"/><path d="M3 6.5h7M6.5 3c-2 2-2 5 0 7" fill="none" stroke="#1c7a7a" stroke-width="1.2"/></svg>
<svg class="a" style="left:1144px;top:745px;" width="16" height="10" viewBox="0 0 16 10"><path d="M1.5 8l6.5-6 6.5 6" fill="none" stroke="#f2f8f8" stroke-width="1.8"/></svg>
<svg class="a" style="left:1167px;top:745px;" width="11" height="13" viewBox="0 0 11 13"><path d="M1 11l8-10v11z" fill="#f08c9a"/><path d="M9 1v11" stroke="#d83a50" stroke-width="1.6"/></svg>
<svg class="a" style="left:1186px;top:745px;" width="14" height="13" viewBox="0 0 14 13"><path d="M4 1c-3 3-3 8 0 11M10 1c3 3 3 8 0 11M6 2v9M8 2v9" fill="none" stroke="#f2f8f8" stroke-width="1.4"/></svg>
<div class="a t" style="left:1206.70px;top:746.84px;font-family:'Liberation Sans',sans-serif;font-size:12px;line-height:12px;color:#e8f2f2;letter-spacing:4.000px;">ıŋ</div>
<div class="a t" style="left:1235.40px;top:737.46px;font-family:'Liberation Sans',sans-serif;font-size:11.5px;line-height:11.5px;color:#e8f2f2;letter-spacing:0.062px;">0ʼn&#160;28803</div>
<div class="a t" style="left:1235.40px;top:753.96px;font-family:'Liberation Sans',sans-serif;font-size:11.5px;line-height:11.5px;color:#e8f2f2;letter-spacing:-1.409px;">3002&#160;2420186</div>
<svg class="a" style="left:1304px;top:741px;" width="21" height="22" viewBox="0 0 21 22"><rect x="1" y="1.5" width="18.5" height="14" fill="none" stroke="#f2f8f8" stroke-width="1.6"/><path d="M4 5h12.5M4 8h12.5M4 11h12.5" stroke="#f2f8f8" stroke-width="1.2"/><path d="M5 15.5l-1 5 5-5M14 15.5l5 5" fill="none" stroke="#f2f8f8" stroke-width="1.4"/></svg>
<div class="a" style="left:1338px;top:734px;width:1px;height:34px;background:#5aa4a4;"></div>
</body></html>
